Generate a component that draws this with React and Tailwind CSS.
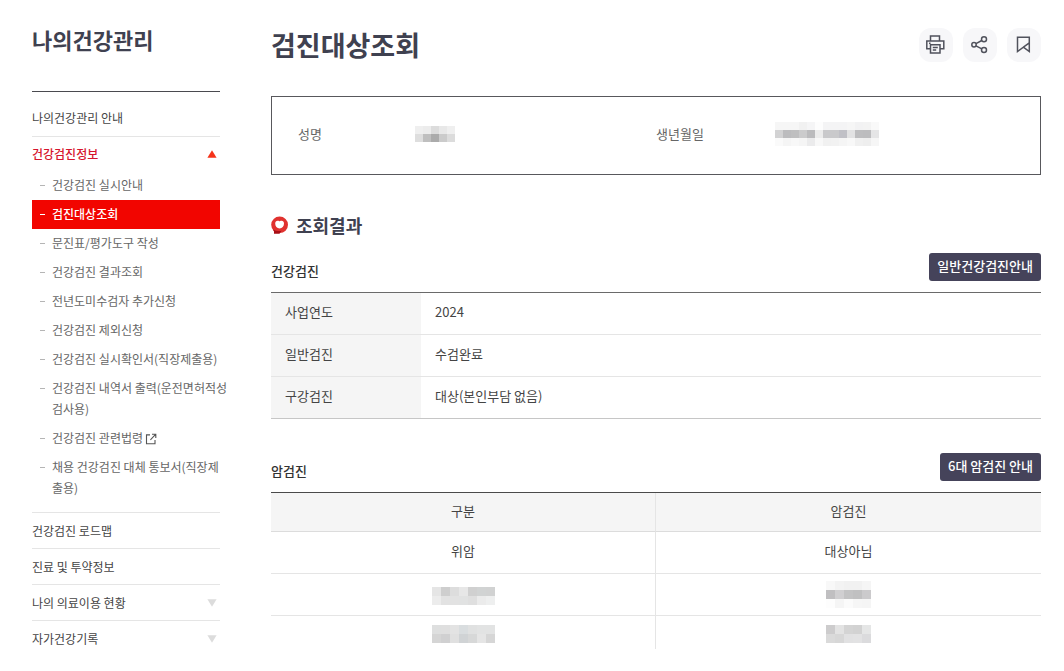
const FONT = "font-['Noto_Sans_CJK_KR','Noto_Sans',sans-serif]";

const SUB_ITEMS = [
  { lines: ['건강검진 실시안내'] },
  { lines: ['검진대상조회'], active: true },
  { lines: ['문진표/평가도구 작성'] },
  { lines: ['건강검진 결과조회'] },
  { lines: ['전년도미수검자 추가신청'] },
  { lines: ['건강검진 제외신청'] },
  { lines: ['건강검진 실시확인서(직장제출용)'] },
  { lines: ['건강검진 내역서 출력(운전면허적성', '검사용)'] },
  { lines: ['건강검진 관련법령'], external: true },
  { lines: ['채용 건강검진 대체 통보서(직장제', '출용)'] },
];

const NAV_ITEMS = [
  { label: '건강검진 로드맵' },
  { label: '진료 및 투약정보' },
  { label: '나의 의료이용 현황', expandable: true },
  { label: '자가건강기록', expandable: true },
];

const RESULTS = [
  ['사업연도', '2024'],
  ['일반검진', '수검완료'],
  ['구강검진', '대상(본인부담 없음)'],
];

const NAME_MASK = {
  size: 8,
  rows: [
    ['#efefef', '#ececec', '#dcdcdc', '#e8e8e8', '#efefef'],
    ['#dedede', '#bfbfbf', '#ababab', '#cbcbcb', '#dcdcdc'],
  ],
};
const BIRTH_MASK = {
  size: 8,
  rows: [
    ['#f6f6f6', '#f6f6f6', '#f6f6f6', '#f1f1f1', '#f5f5f6', '#fdfdfd', '#f4f4f5', '#f4f4f5', '#f4f4f5', '#f6f6f6', '#f2f2f3', '#f3f3f3', '#f9f9f9'],
    ['#d2d2d3', '#bcbcbe', '#bfbfc0', '#cbcbcc', '#bbbbbd', '#ececec', '#c9c9cb', '#c9c9cb', '#c0c0c6', '#e2e2e3', '#bdbdbf', '#bcbcbe', '#e5e5e6'],
    ['#fafafa', '#f5f5f5', '#f8f8f8', '#f5f5f5', '#ebebec', '#f8f8f8', '#f1f1f1', '#f2f2f2', '#f5f5f5', '#f8f8f8', '#f0f0f0', '#eeeeee', '#f6f6f6'],
  ],
};
const CANCER_MASKS = [
  [
    {
      size: 9,
      rows: [
        ['#e5e5e5', '#cecece', '#dddddd', '#e7e7e7', '#d0d0d0', '#d1d3d3', '#d1d2d2'],
        ['#ececec', '#e2e2e2', '#e2e2e2', '#e1e2e2', '#dfdfdf', '#ebebeb', '#eeefef'],
      ],
    },
    {
      size: 9,
      rows: [
        ['#f8f8f8', '#f3f3f3', '#f1f1f1', '#f1f1f1', '#f5f5f5'],
        ['#c0bfc1', '#d0cfd1', '#c3c3c4', '#c0c0c1', '#cbcacc'],
        ['#fdfdfd', '#f5f5f5', '#fbfbfb', '#f6f6f6', '#f5f5f5'],
      ],
    },
  ],
  [
    {
      size: 9,
      rows: [
        ['#dedfdf', '#dfdfdf', '#e3e3e3', '#d9dddf', '#e0e1e1', '#e2e3e3', '#e2e3e3'],
        ['#d5d5d5', '#d0d0d1', '#e0e0e0', '#d0d3d5', '#d7d8d8', '#e5e5e5', '#d6d6d6'],
      ],
    },
    {
      size: 9,
      rows: [
        ['#cdcccd', '#e3e3e3', '#d4d4d4', '#d2d2d2', '#e5e6e6'],
        ['#dadada', '#d7d7d7', '#e1e1e2', '#e2e2e3', '#dbdbdd'],
      ],
    },
  ],
];

function Mosaic({ mask, label }) {
  const { size, rows } = mask;
  const width = rows[0].length * size;
  const height = rows.length * size;
  return (
    <svg role="img" aria-label={label} width={width} height={height} className="inline-block align-middle" shapeRendering="crispEdges">
      {rows.map((row, y) =>
        row.map((fill, x) => <rect key={`${x}-${y}`} x={x * size} y={y * size} width={size} height={size} fill={fill} />)
      )}
    </svg>
  );
}

function Triangle({ up }) {
  return (
    <svg width="10" height="8" viewBox="0 0 10 8" aria-hidden="true" className={up ? 'mr-[3px] text-[#f5331a]' : 'mr-[3px] text-[#dcdcdc]'}>
      <path d={up ? 'M5 0.3 9.6 7.7H0.4Z' : 'M5 7.7 0.4 0.3H9.6Z'} fill="currentColor" />
    </svg>
  );
}

function ExternalIcon() {
  return (
    <svg width="12" height="12" viewBox="0 0 12 12" fill="none" stroke="#555" strokeWidth="1.1" aria-hidden="true" className="mb-0.5 ml-0.5 inline-block align-middle">
      <path d="M5 1.9H1.5V10.8H10V7M7 1.2H10.8V5M10.6 1.4 5.4 6.8" />
    </svg>
  );
}

function Sidebar() {
  return (
    <aside className="w-[188px] shrink-0">
      <h2 className="h-[91px] pt-[22px] text-[22px] leading-[34px] font-bold text-[#3f4150]">나의건강관리</h2>
      <nav aria-label="나의건강관리" className="border-t border-[#4a4a4f] text-xs whitespace-nowrap text-[#444]">
        <a href="#guide" className="flex h-[45px] items-center border-b border-[#e5e5e5] pt-2">
          나의건강관리 안내
        </a>
        <div className="border-b border-[#e5e5e5] pb-[9px]">
          <a href="#info" className="flex h-[34px] items-center justify-between font-medium text-[#d6142d]">
            건강검진정보
            <Triangle up />
          </a>
          <ul className="text-[#666]">
            {SUB_ITEMS.map(({ lines, active, external }) => (
              <li key={lines[0]}>
                <a
                  href="#item"
                  aria-current={active ? 'page' : undefined}
                  className={
                    active
                      ? 'flex bg-[#f20500] pt-[3px] pb-[5px] pl-2 leading-[21px] font-medium text-white'
                      : 'flex pt-[3px] pb-[5px] pl-2 leading-[21px]'
                  }
                >
                  <span
                    aria-hidden="true"
                    className={active ? 'mt-[11px] h-px w-[5px] shrink-0 bg-white' : 'mt-[11px] h-px w-[5px] shrink-0 bg-[#b5b5b5]'}
                  />
                  <span className="ml-[7px]">
                    {lines.map((line) => (
                      <span key={line} className="block">
                        {line}
                        {external && <ExternalIcon />}
                      </span>
                    ))}
                  </span>
                </a>
              </li>
            ))}
          </ul>
        </div>
        {NAV_ITEMS.map(({ label, expandable }) => (
          <a key={label} href="#nav" className="flex h-9 items-center justify-between border-b border-[#e5e5e5] last:border-b-0">
            {label}
            {expandable && <Triangle />}
          </a>
        ))}
      </nav>
    </aside>
  );
}

function ToolButton({ label, children }) {
  return (
    <button type="button" aria-label={label} className="flex size-[34px] items-center justify-center rounded-xl bg-[#f7f7f9] text-[#50525c]">
      <svg width="20" height="20" viewBox="0 0 20 20" fill="none" stroke="currentColor" strokeWidth="1.5" aria-hidden="true">
        {children}
      </svg>
    </button>
  );
}

function SectionBar({ title, action }) {
  return (
    <div className="flex h-[39px] items-start justify-between">
      <h4 className="pt-[7px] text-[13px] leading-[22px] font-medium text-[#333]">{title}</h4>
      <button type="button" className="h-7 rounded-[3px] bg-[#45435a] px-2 pb-0.5 text-[13px] leading-[26px] font-medium text-white">
        {action}
      </button>
    </div>
  );
}

export default function App() {
  return (
    <div className={`${FONT} flex gap-[51px] bg-white pr-[23px] pb-6 pl-8`}>
      <Sidebar />
      <main className="min-w-0 flex-1 text-[13px] text-[#444]">
        <header className="flex h-24 items-start justify-between pt-7">
          <h1 className="text-[27px] leading-[34px] font-bold text-[#3f4150]">검진대상조회</h1>
          <div className="flex gap-2.5">
            <ToolButton label="인쇄">
              <path d="M4.5 5.8V1H13.5V5.8M4 13.8H0.8V6H17.8V13.8H14M4.5 9.8H14V18H4.5ZM6.8 12.5H11.8M6.8 15H10.2M3 8.2H4.6" />
            </ToolButton>
            <ToolButton label="공유">
              <circle cx="4" cy="9.7" r="2.2" />
              <circle cx="14" cy="4.3" r="2.5" />
              <circle cx="14" cy="15.1" r="2.5" />
              <path d="M6 8.6 11.8 5.5M6 10.8 11.8 13.9" />
            </ToolButton>
            <ToolButton label="북마크">
              <path d="M3.5 2.2H15.3V16.6L9.4 12.2 3.5 16.6ZM9.4 12.2 15.3 7.8" />
            </ToolButton>
          </div>
        </header>

        <dl className="grid h-[79px] grid-cols-2 items-center border border-[#58585c] px-[26px] pb-1 text-[#666]">
          <div className="flex items-center">
            <dt className="w-[117px]">성명</dt>
            <dd className="flex"><Mosaic mask={NAME_MASK} label="성명" /></dd>
          </div>
          <div className="flex items-center">
            <dt className="w-[119px]">생년월일</dt>
            <dd className="flex"><Mosaic mask={BIRTH_MASK} label="생년월일" /></dd>
          </div>
        </dl>

        <h3 className="mt-9 flex h-7 items-center gap-2 text-lg leading-7 font-bold text-[#3f4150]">
          <svg width="17" height="18" viewBox="0 0 17 18" aria-hidden="true">
            <ellipse cx="8.6" cy="8.8" rx="8.4" ry="8.3" fill="#e0322f" />
            <path d="M2 13.4Q6 15.8 10.5 14.7L8.5 17.8H3V15.6Z" fill="#a80e16" />
            <path d="M8.6 12.4C6 12.4 4.2 10.4 4.2 7.6 4.2 5.6 5.2 4.8 6.6 4.8 7.8 4.8 8.6 5.5 8.6 5.5S9.4 4.8 10.6 4.8C12 4.8 13 5.6 13 7.6 13 10.4 11.2 12.4 8.6 12.4Z" fill="#fff" />
          </svg>
          조회결과
        </h3>

        <section className="mt-3.5">
          <SectionBar title="건강검진" action="일반건강검진안내" />
          <div className="border-t border-[#6a6a6a]">
            <table className="w-full border-separate border-spacing-0 text-left">
              <tbody className="[&>tr:last-child>*]:border-b-[#c6c6c6]">
                {RESULTS.map(([label, value]) => (
                  <tr key={label} className="h-[42px]">
                    <th scope="row" className="w-[150px] border-b border-[#e5e5e5] bg-[#f5f5f5] px-3.5 pb-[3px] font-normal">{label}</th>
                    <td className="border-b border-[#e5e5e5] px-3.5 pb-[3px]">{value}</td>
                  </tr>
                ))}
              </tbody>
            </table>
          </div>
        </section>

        <section className="mt-[34px]">
          <SectionBar title="암검진" action="6대 암검진 안내" />
          <div className="border-t border-[#4a4a4a]">
            <table className="w-full table-fixed border-separate border-spacing-0 text-center">
              <thead>
                <tr className="h-[39px] bg-[#f5f5f5]">
                  <th scope="col" className="border-r border-b border-r-[#e5e5e5] border-b-[#dcdcdc] pb-[3px] font-normal">구분</th>
                  <th scope="col" className="border-b border-[#dcdcdc] pb-[3px] font-normal">암검진</th>
                </tr>
              </thead>
              <tbody className="[&>tr:last-child>td]:border-b-0">
                <tr className="h-[42px]">
                  <td className="border-r border-b border-[#e5e5e5] pb-[3px]">위암</td>
                  <td className="border-b border-[#e5e5e5] pb-[3px]">대상아님</td>
                </tr>
                {CANCER_MASKS.map(([kind, state], i) => (
                  <tr key={i} className="h-[42px] last:h-[33px]">
                    <td className="border-r border-b border-[#e5e5e5] p-0"><Mosaic mask={kind} label="암종" /></td>
                    <td className="border-b border-[#e5e5e5] p-0"><Mosaic mask={state} label="대상 여부" /></td>
                  </tr>
                ))}
              </tbody>
            </table>
          </div>
        </section>
      </main>
    </div>
  );
}
